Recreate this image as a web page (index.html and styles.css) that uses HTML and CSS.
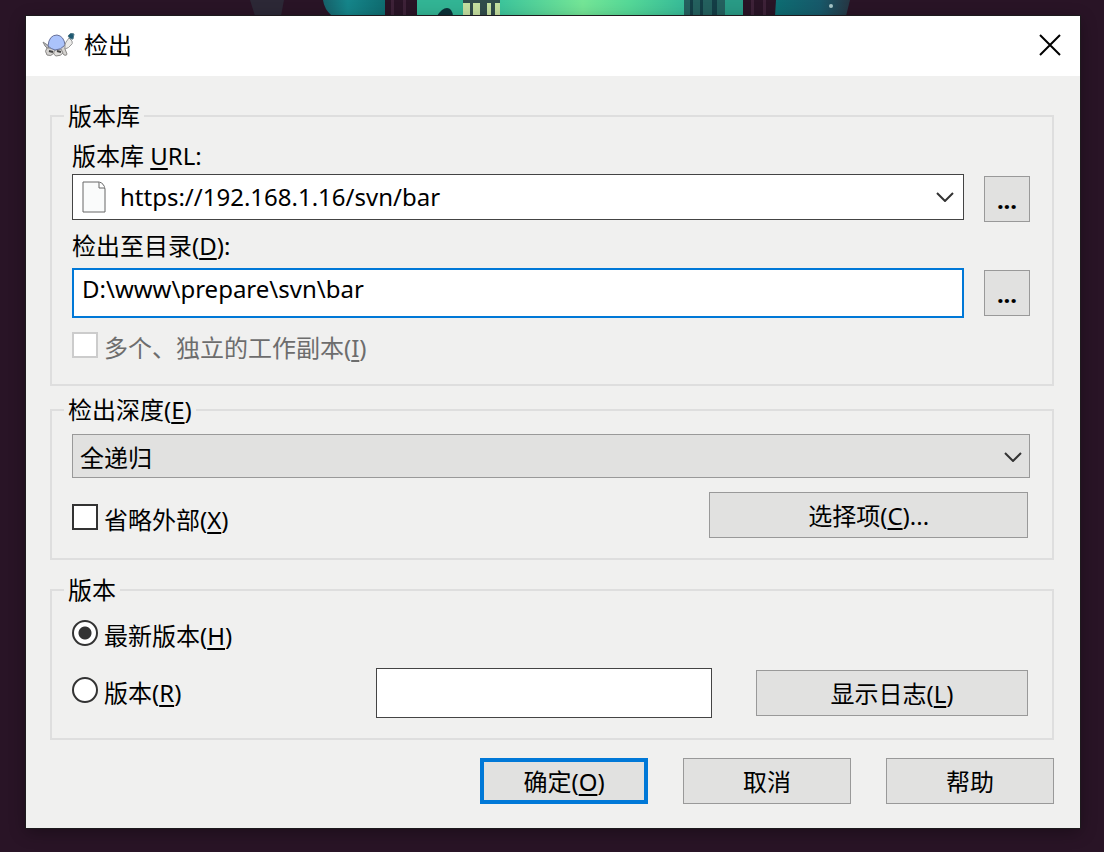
FILE: index.html
```html
<!DOCTYPE html>
<html lang="zh-CN">
<head>
<meta charset="utf-8">
<title>检出</title>
<link rel="stylesheet" href="styles.css">
</head>
<body class="desktop">
<svg class="wallpaper" width="1104" height="16" viewBox="0 0 1104 16" aria-hidden="true">
  <defs>
    <linearGradient id="glow"><stop offset="0" stop-color="#3cc49b"/><stop offset=".45" stop-color="#74e596"/><stop offset=".7" stop-color="#55d897"/><stop offset="1" stop-color="#37bb98"/></linearGradient>
    <linearGradient id="left"><stop offset="0" stop-color="#176069"/><stop offset=".4" stop-color="#15858a"/><stop offset="1" stop-color="#0f6c70"/></linearGradient>
    <linearGradient id="right"><stop offset="0" stop-color="#0d6d72"/><stop offset=".6" stop-color="#17596a"/><stop offset="1" stop-color="#273643"/></linearGradient>
  </defs>
  <path fill="#2c2836" d="M250 0h34l-3 16h-26z"/>
  <path fill="url(#left)" d="M323 0h62v16h-53q-8-7-9-16z"/>
  <path fill="#3d2238" d="M391 0h3v16h-3zM403 0h3v16h-3z"/>
  <path fill="#32b494" d="M417 0h46v16h-46z"/>
  <path fill="#0b3037" d="M437 16q5-8 10-8t6 8z"/>
  <path fill="#c5dfa0" d="M463 2h37v14h-37z"/>
  <path fill="#314c4b" d="M463 0h37v3h-37zM470 3h3v13h-3zM480 3h7v13h-7zM491 3h4v13h-4z"/>
  <path fill="url(#glow)" d="M500 0h184v16H500z"/>
  <path fill="#24605e" d="M684 0h41v16h-41z"/>
  <path fill="#143e46" d="M690 0h3v16h-3zM700 0h3v16h-3zM712 0h5v16h-5z"/>
  <path fill="#299a85" d="M725 0h18v16h-18z"/>
  <path fill="#3d2238" d="M751 0h3v16h-3zM763 0h3v16h-3z"/>
  <path fill="url(#right)" d="M776 0h74l-4 16h-71z"/>
  <circle cx="831" cy="6" r="2" fill="#a6c5c7"/>
</svg>

<main class="dialog">
  <header class="titlebar">
    <svg class="turtle" width="34" height="28" viewBox="0 0 34 28" aria-hidden="true">
      <path d="M1 11l6 4-1 3-3-3z" fill="#bbb" stroke="#888"/>
      <path d="M5 17q-3 3 0 7 4 2 7-2l3-3 4 1 3 4q3 1 3-1l-2-5 1-4-7 3z" fill="#d5d3d0" stroke="#8a8886"/>
      <path d="M13 19q-3 4 1 6 5 0 7-3l-2-4z" fill="#dfddda" stroke="#8a8886"/>
      <path d="M6 15Q7 4 15 4q7 1 8 10-4 5-10 5-4-1-7-4z" fill="#abc3fb" stroke="#66709a"/>
      <path d="M23 18q4-1 6-4 2-1 1-4l-3-3-3 4-1 3z" fill="#ecebe9" stroke="#999"/>
      <path d="M26 5q2-4 6-2l-1 5q-3 1-5-3z" fill="#1d5972" stroke="#517988"/>
      <path d="M7 20l4 1M15 20l4 1" stroke="#444" stroke-width="2"/>
    </svg>
    <h1 class="title">检出</h1>
    <button class="close" type="button" aria-label="关闭">
      <svg width="22" height="22" viewBox="0 0 22 22" aria-hidden="true"><path d="M1 1l20 20M21 1L1 21" stroke="#000" stroke-width="2" fill="none"/></svg>
    </button>
  </header>

  <form class="content">
    <fieldset class="group group-repo">
      <legend>版本库</legend>
      <label class="caption" for="url">版本库 <u>U</u>RL:</label>
      <div class="field-row field-row-url">
        <div class="combo">
          <svg class="page-icon" width="24" height="32" viewBox="0 0 24 32" aria-hidden="true"><path d="M1 1h16q5 1 6 7v23H1z" fill="#fafbfb" stroke="#666"/><path d="M17 1v6h6" fill="#fff" stroke="#666"/></svg>
          <input id="url" class="combo-input" type="text" value="https://192.168.1.16/svn/bar">
          <button class="combo-arrow" type="button" aria-label="展开">
            <svg width="18" height="10" viewBox="0 0 18 10" aria-hidden="true"><path d="M1 1l8 8 8-8" fill="none" stroke="#333" stroke-width="2"/></svg>
          </button>
        </div>
        <button class="btn btn-more" type="button" aria-label="浏览版本库">...</button>
      </div>
      <label class="caption" for="dir">检出至目录(<u>D</u>):</label>
      <div class="field-row field-row-dir">
        <input id="dir" class="text text-focus" type="text" value="D:\www\prepare\svn\bar">
        <button class="btn btn-more" type="button" aria-label="浏览目录">...</button>
      </div>
      <label class="option option-off"><input class="box" type="checkbox" disabled><span>多个、独立的工作副本(<u>I</u>)</span></label>
    </fieldset>

    <fieldset class="group group-depth">
      <legend>检出深度(<u>E</u>)</legend>
      <div class="select-wrap">
        <select class="select" aria-label="检出深度"><option>全递归</option></select>
        <svg class="select-arrow" width="18" height="10" viewBox="0 0 18 10" aria-hidden="true"><path d="M1 1l8 8 8-8" fill="none" stroke="#333" stroke-width="2"/></svg>
      </div>
      <div class="depth-row">
        <label class="option"><input class="box" type="checkbox"><span>省略外部(<u>X</u>)</span></label>
        <button class="btn" type="button">选择项(<u>C</u>)...</button>
      </div>
    </fieldset>

    <fieldset class="group group-revision">
      <legend>版本</legend>
      <label class="option"><input class="box round" type="radio" name="rev" checked><span>最新版本(<u>H</u>)</span></label>
      <div class="revision-row">
        <label class="option"><input class="box round" type="radio" name="rev"><span>版本(<u>R</u>)</span></label>
        <input class="text" type="text" aria-label="版本">
        <button class="btn" type="button">显示日志(<u>L</u>)</button>
      </div>
    </fieldset>

    <footer class="actions">
      <button class="btn btn-default" type="submit">确定(<u>O</u>)</button>
      <button class="btn" type="button">取消</button>
      <button class="btn" type="button">帮助</button>
    </footer>
  </form>
</main>
</body>
</html>
```
FILE: styles.css
```css
* {
  box-sizing: border-box;
}

.desktop {
  margin: 0;
  min-height: 100vh;
  padding: 16px 24px 24px 26px;
  background: #291426;
  color: #000;
  font: 24px/28px "Noto Sans", "Noto Sans CJK SC", sans-serif;
}

.desktop input,
.desktop button,
.desktop select {
  margin: 0;
  font: inherit;
  color: inherit;
}

.wallpaper {
  position: absolute;
  top: 0;
  left: 0;
}

.dialog {
  position: relative;
  background: #f0f0ef;
  box-shadow: 0 0 0 1px #1d1a1d, 0 4px 16px #0005;
}

.titlebar {
  display: flex;
  align-items: center;
  height: 60px;
  padding: 0 19px 2px 16px;
  background: #fff;
}

.title {
  flex: 1;
  margin: 0 0 0 8px;
  font-size: 24px;
  font-weight: 400;
}

.close {
  display: flex;
  padding: 0;
  border: 0;
  background: none;
}

.content {
  padding: 26px 26px 24px 24px;
}

.group {
  min-width: 0;
  margin: 0;
  padding: 12px 22px 20px 20px;
  border: 2px solid #dedede;
}

.group legend {
  margin-left: -8px;
  padding: 0 4px;
}

.group-depth {
  margin-top: 10px;
  padding-top: 10px;
}

.group-revision {
  margin-top: 16px;
  padding-top: 16px;
}

.desktop u {
  text-underline-offset: 3px;
}

.caption {
  display: block;
}

.field-row {
  display: grid;
  grid-template-columns: 1fr 46px;
  gap: 20px;
}

.field-row-url {
  height: 48px;
  margin: 4px 0 10px;
}

.field-row-url .btn {
  align-self: end;
}

.field-row-dir {
  align-items: center;
  margin: 8px 0 14px;
}

.combo {
  display: flex;
  align-items: center;
  height: 46px;
  padding: 0 9px;
  border: 1px solid #444;
  background: #fff;
}

.combo-input {
  flex: 1;
  min-width: 0;
  padding: 0 0 0 14px;
  border: 0;
  background: none;
  outline: 0;
}

.combo-arrow {
  display: flex;
  padding: 0;
  border: 0;
  background: none;
}

.text {
  width: 100%;
  min-width: 0;
  height: 50px;
  padding: 0 8px;
  border: 1px solid #444;
  background: #fff;
  outline: 0;
}

.text-focus {
  padding-bottom: 10px;
  border: 2px solid #0078d7;
}

.btn {
  height: 46px;
  padding: 2px 0 0;
  border: 1px solid #999;
  background: #e1e1e0;
}

.desktop .btn-more {
  font-weight: 700;
}

.btn-default {
  border: 4px solid #0078d7;
}

.option {
  display: flex;
  align-items: flex-start;
  gap: 6px;
  line-height: 32px;
}

.option-off {
  color: #6d6d6d;
}

.box {
  appearance: none;
  flex: none;
  width: 26px;
  height: 26px;
  border: 2px solid #333;
  background: #fff;
}

.box:disabled {
  border-color: #ccc;
}

.round {
  border-radius: 50%;
}

.round:checked {
  background: radial-gradient(circle, #333 6px, #fff 7px);
}

.select-wrap {
  position: relative;
}

.select {
  appearance: none;
  display: block;
  width: 100%;
  height: 44px;
  padding: 4px 40px 0 7px;
  border: 1px solid #999;
  border-radius: 0;
  background: #e1e1e0;
}

.select-arrow {
  position: absolute;
  top: 18px;
  right: 8px;
  pointer-events: none;
}

.depth-row {
  display: grid;
  grid-template-columns: 2fr 1fr;
  align-items: center;
  margin: 14px 2px 0 0;
}

.depth-row .option {
  margin-top: 10px;
}

.revision-row {
  display: grid;
  grid-template-columns: 260fr 336fr 272fr;
  align-items: center;
  gap: 44px;
  margin: 16px 2px 0 0;
}

.actions {
  display: grid;
  grid-template-columns: repeat(3, 168px);
  justify-content: end;
  gap: 35px;
  margin-top: 18px;
}
```
